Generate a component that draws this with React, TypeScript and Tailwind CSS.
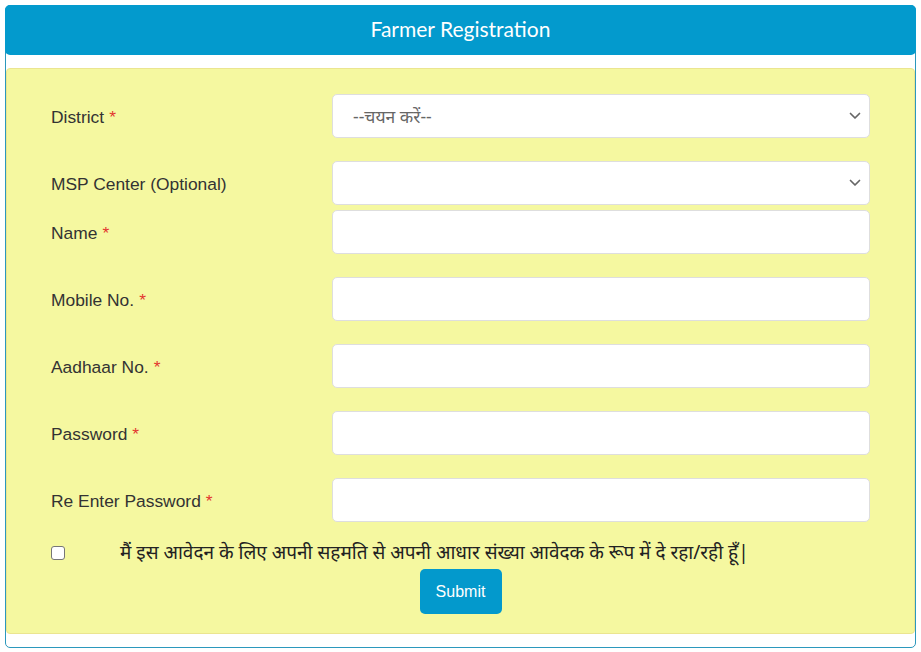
import React from "react";

const Chevron = () => (
  <svg width="12" height="8" viewBox="0 0 12 8" className="absolute right-[9px] top-1/2 -translate-y-1/2">
    <path d="M1.5 1.5 L6 6 L10.5 1.5" fill="none" stroke="#666" strokeWidth="1.7" strokeLinecap="round" strokeLinejoin="round" />
  </svg>
);

const Req = () => <span className="text-[#e3342f] ml-[5px]">*</span>;

function Row({ label, req, children, mb }: { label: string; req?: boolean; children: React.ReactNode; mb: string }) {
  return (
    <div className={`flex items-center ${mb}`}>
      <div className="w-[281px] pt-[3px] text-[17.4px] text-[#333]">
        {label}
        {req && <Req />}
      </div>
      <div className="relative w-[538px] h-[44px]">{children}</div>
    </div>
  );
}

const inputCls =
  "w-full h-full bg-white border border-[#dedede] rounded-[5px] outline-none px-[20px] text-[16px] text-[#555]";

export default function App() {
  return (
    <div className="w-[921px] h-[652px] bg-white p-[5px]" style={{ fontFamily: '"Liberation Sans", Arial, sans-serif' }}>
      <div className="h-[643px] border border-[#2b98bd] rounded-[5px] flex flex-col">
        <div
          className="-mx-px -mt-px h-[50px] pb-[2px] bg-[#039acd] rounded-[5px] flex items-center justify-center text-white text-[21px]"
          style={{ fontFamily: 'Lato, "Open Sans", sans-serif' }}
        >
          Farmer Registration
        </div>
        <div className="mt-[13px] h-[566px] bg-[#f5f8a0] border border-[#ebe590] rounded-[4px] px-[44px] pt-[25px]">
          <Row label="District" req mb="mb-[23px]">
            <div className={`${inputCls} flex items-center`}>
              <span style={{ fontFamily: '"Noto Sans", "Liberation Sans", sans-serif' }} className="text-[#666] text-[17.5px]">
                --चयन करें--
              </span>
            </div>
            <Chevron />
          </Row>
          <Row label="MSP Center (Optional)" mb="mb-[5px]">
            <div className={inputCls} />
            <Chevron />
          </Row>
          <Row label="Name" req mb="mb-[23px]">
            <input className={inputCls} />
          </Row>
          <Row label="Mobile No." req mb="mb-[23px]">
            <input className={inputCls} />
          </Row>
          <Row label="Aadhaar No." req mb="mb-[23px]">
            <input className={inputCls} />
          </Row>
          <Row label="Password" req mb="mb-[23px]">
            <input type="password" className={inputCls} />
          </Row>
          <Row label="Re Enter Password" req mb="mb-[13px]">
            <input type="password" className={inputCls} />
          </Row>
          <div className="flex items-center h-[34px]">
            <input
              type="checkbox"
              className="appearance-none w-[14px] h-[14px] bg-white border border-[#767676] rounded-[3px] mt-[2px]"
            />
            <span
              className="ml-[55px] text-[19px] text-[#222]"
              style={{ fontFamily: '"Noto Sans", "Liberation Sans", sans-serif' }}
            >
              मैं इस आवेदन के लिए अपनी सहमति से अपनी आधार संख्या आवेदक के रूप में दे रहा/रही हूँ|
            </span>
          </div>
          <div className="flex justify-center mt-0">
            <button className="w-[82px] h-[45px] bg-[#0399cc] rounded-[5px] text-white text-[16px]">Submit</button>
          </div>
        </div>
      </div>
    </div>
  );
}
